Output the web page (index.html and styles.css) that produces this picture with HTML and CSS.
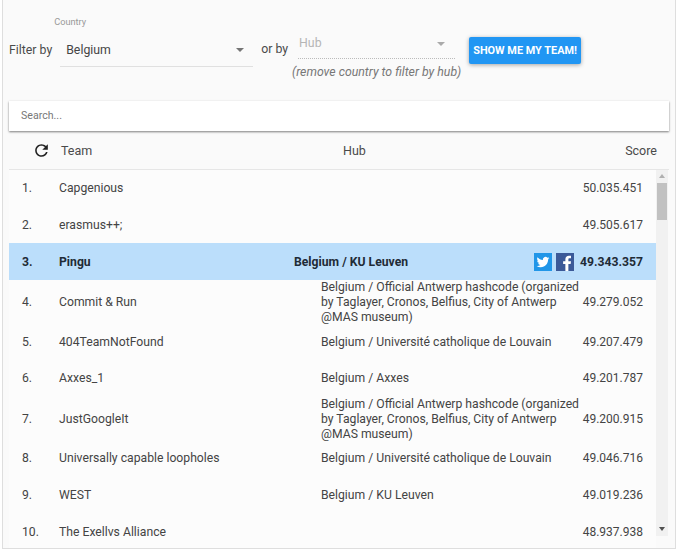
FILE: index.html
```html
<!DOCTYPE html>
<html lang="en">
<head>
<meta charset="utf-8">
<title>Leaderboard</title>
<link rel="stylesheet" href="styles.css">
</head>
<body>
<main class="panel">
  <form class="filters">
    <span class="filter-text">Filter by</span>
    <div class="select select-country">
      <span class="float-label">Country</span>
      <span class="select-value">Belgium</span>
      <span class="caret"></span>
    </div>
    <span class="filter-text or-by">or by</span>
    <div class="hub-group">
      <div class="select select-hub">
        <span class="select-value hub-placeholder">Hub</span>
        <span class="caret caret-light"></span>
      </div>
      <p class="hint">(remove country to filter by hub)</p>
    </div>
    <button class="cta" type="button">SHOW ME MY TEAM!</button>
  </form>
  <div class="search">Search...</div>
  <div class="table-head">
    <svg class="refresh" viewBox="0 0 24 24" width="19" height="19"><path d="M17.65 6.35C16.2 4.9 14.21 4 12 4c-4.42 0-7.99 3.58-7.99 8s3.57 8 7.99 8c3.73 0 6.84-2.55 7.73-6h-2.08c-.82 2.33-3.04 4-5.65 4-3.31 0-6-2.69-6-6s2.69-6 6-6c1.66 0 3.14.69 4.22 1.78L13 11h7V4l-2.35 2.35z"/></svg>
    <span class="head-team">Team</span>
    <span class="head-hub">Hub</span>
    <span class="head-score">Score</span>
  </div>
  <div class="table-body">
    <div class="rows">
      <div class="row"><span>1.</span><span>Capgenious</span><span></span><span class="score">50.035.451</span></div>
      <div class="row"><span>2.</span><span>erasmus++;</span><span></span><span class="score">49.505.617</span></div>
      <div class="row row-me"><span>3.</span><span>Pingu</span><span>Belgium / KU Leuven</span>
        <span class="share">
          <svg class="social tw" viewBox="0 0 24 24" width="18" height="18"><rect width="24" height="24" fill="#2196e8"/><path transform="translate(3.500 3.500) scale(.71)" fill="#fff" d="M23.953 4.57a10 10 0 01-2.825.775 4.958 4.958 0 002.163-2.723c-.951.555-2.005.959-3.127 1.184a4.92 4.92 0 00-8.384 4.482C7.69 8.095 4.067 6.13 1.64 3.162a4.822 4.822 0 00-.666 2.475c0 1.71.87 3.213 2.188 4.096a4.904 4.904 0 01-2.228-.616v.06a4.923 4.923 0 003.946 4.827 4.996 4.996 0 01-2.212.085 4.936 4.936 0 004.604 3.417 9.867 9.867 0 01-6.102 2.105c-.39 0-.779-.023-1.17-.067a13.995 13.995 0 007.557 2.209c9.053 0 13.998-7.496 13.998-13.985 0-.21 0-.42-.015-.63A9.935 9.935 0 0024 4.59z"/></svg>
          <svg class="social fb" viewBox="0 0 24 24" width="18" height="18"><rect width="24" height="24" fill="#3b5998"/><path fill="#fff" d="M16.5 24v-9.300h3l.5-3.700h-3.500V8.800c0-1.100.3-1.800 1.800-1.800H20V3.700c-.4-.1-1.500-.2-2.800-.2-2.800 0-4.700 1.700-4.700 4.800V11H9.500v3.700h3V24z"/></svg>
        </span>
        <span class="score">49.343.357</span></div>
      <div class="row row-tall"><span>4.</span><span>Commit &amp; Run</span><span>Belgium / Official Antwerp hashcode (organized by Taglayer, Cronos, Belfius, City of Antwerp @MAS museum)</span><span class="score">49.279.052</span></div>
      <div class="row"><span>5.</span><span>404TeamNotFound</span><span>Belgium / Université catholique de Louvain</span><span class="score">49.207.479</span></div>
      <div class="row"><span>6.</span><span>Axxes_1</span><span>Belgium / Axxes</span><span class="score">49.201.787</span></div>
      <div class="row row-tall"><span>7.</span><span>JustGoogleIt</span><span>Belgium / Official Antwerp hashcode (organized by Taglayer, Cronos, Belfius, City of Antwerp @MAS museum)</span><span class="score">49.200.915</span></div>
      <div class="row"><span>8.</span><span>Universally capable loopholes</span><span>Belgium / Université catholique de Louvain</span><span class="score">49.046.716</span></div>
      <div class="row"><span>9.</span><span>WEST</span><span>Belgium / KU Leuven</span><span class="score">49.019.236</span></div>
      <div class="row"><span>10.</span><span>The Exellvs Alliance</span><span></span><span class="score">48.937.938</span></div>
    </div>
    <div class="scrollbar">
      <span class="sb-arrow sb-up"></span>
      <span class="sb-thumb"></span>
      <span class="sb-arrow sb-down"></span>
    </div>
  </div>
</main>
</body>
</html>
```
FILE: styles.css
```css
* { box-sizing: border-box; }
html, body { margin: 0; height: 100%; overflow: hidden; background: #fff; }
body { font-family: Roboto, "Liberation Sans", sans-serif; font-size: 12px; color: #444; }
.panel {
  margin-left: 2px;
  width: 674px;
  height: 549px;
  padding: 0 5px 0 6px;
  background: #fafafa;
  border-left: 1px solid #dedede;
  border-right: 1px solid #dedede;
  border-bottom: 1px solid #dedede;
  overflow: hidden;
}
.filters { display: flex; align-items: flex-start; height: 101px; padding-top: 29px; }
.filter-text { font-size: 12.300px; line-height: 43px; color: #4a4a4a; }
.select { position: relative; display: flex; align-items: center; }
.select-country { width: 193px; height: 38px; margin: 0 8px 0 8px; padding: 5px 0 0 6px; border-bottom: 1px solid #e0e0e0; font-size: 12.300px; }
.select-value { line-height: 1; }
.float-label { position: absolute; left: -6px; top: -13px; font-size: 9.200px; color: #999; }
.caret { position: absolute; right: 9px; top: 19px; width: 0; height: 0; border-left: 4px solid transparent; border-right: 4px solid transparent; border-top: 4px solid #757575; }
.caret-light { top: 13px; right: 10px; border-top-color: #aaa; }
.or-by { margin-right: 4px; line-height: 41px; }
.hub-group { width: 169px; margin-right: 8px; }
.select-hub { width: 157px; height: 30px; margin-left: 6px; padding-left: 1px; border-bottom: 1px dotted #bbb; font-size: 13px; }
.hub-placeholder { color: #b5b5b5; font-size: 12.300px; }
.hint { margin: 6px 0 0; font-size: 12.300px; line-height: 15px; font-style: italic; color: #777; white-space: nowrap; }
.cta {
  width: 112px; height: 27px; margin-top: 8px; padding: 0; border: 0; border-radius: 2px;
  background: #2196f3; color: #fff; font: 700 10.900px Roboto, sans-serif;
  box-shadow: 0 1px 4px rgba(0,0,0,.35);
}
.search {
  width: 660px; height: 30px; padding: 0 12px; background: #fff; line-height: 29px;
  font-size: 10.600px; color: #777; box-shadow: 0 1px 2px rgba(0,0,0,.5);
}
.table-head { position: relative; display: flex; align-items: center; height: 39px; width: 660px; padding-top: 1px; border-bottom: 1px solid #e6e6e6; font-size: 12.500px; color: #4a4a4a; }
.refresh { margin-left: 23px; fill: #222; }
.head-team { margin-left: 10px; width: 282px; }
.head-score { margin-left: auto; margin-right: 12px; }
.table-body { display: flex; width: 659px; height: 378px; }
.rows { width: 647px; flex: none; background: #fcfcfc; }
.row {
  display: grid; grid-template-columns: 37px 262px 1fr 64px;
  align-items: center; height: 36.700px; padding: 1px 13px 0; line-height: 15px; font-size: 12.200px;
}
.row-tall { height: 43.300px; padding-top: 0; }
.row-me { grid-template-columns: 37px 235px 1fr 45px 64px; background: #bbdefb; font-weight: 700; color: #1f2b36; }
.score { text-align: right; font-size: 12px; }
.row-me .score { font-size: 12.200px; }
.share { display: flex; gap: 4px; }
.social { display: block; }
.scrollbar { position: relative; width: 12px; height: 366px; background: #f1f1f1; }
.sb-thumb { position: absolute; left: 1px; top: 13px; width: 10px; height: 37px; background: #c1c1c1; }
.sb-arrow { position: absolute; left: 3px; width: 0; height: 0; border-left: 3px solid transparent; border-right: 3px solid transparent; }
.sb-up { top: 4px; border-bottom: 4px solid #b0b0b0; }
.sb-down { bottom: 5px; border-top: 4px solid #505050; }
```
